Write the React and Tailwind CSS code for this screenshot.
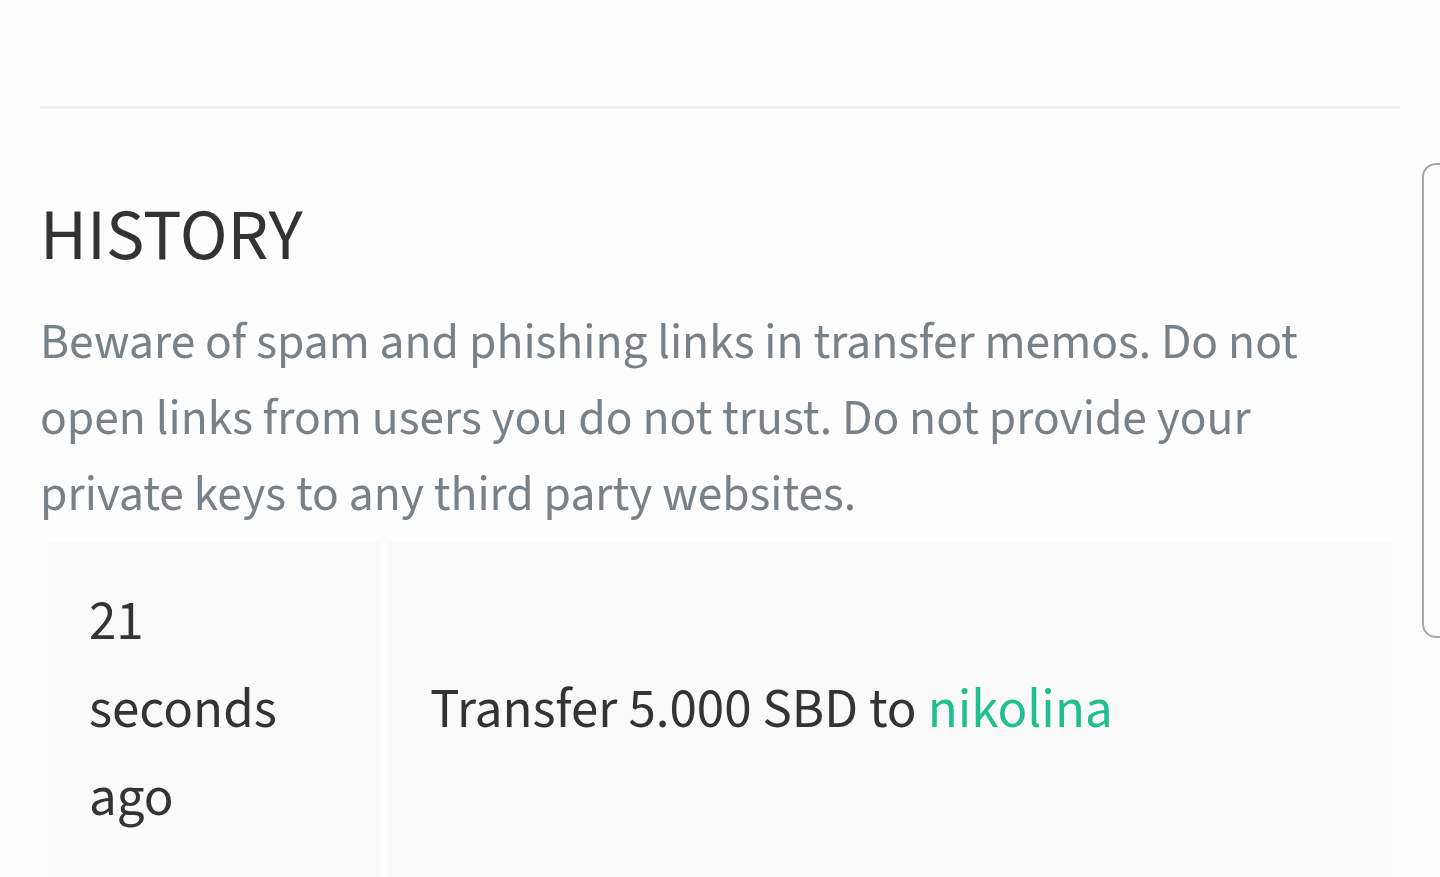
import React from 'react';

const History = () => {
    return (
        <div
            className="relative h-[877px] overflow-hidden bg-[#fdfdfd]"
            style={{ fontFamily: '"Source Sans Pro", "Source Sans 3", Lato, sans-serif' }}
        >
            <div className="px-10 pt-[106px]">
                <div className="h-[3px] bg-[#eeeeee]" />

                {/* Header */}
                <h4 className="mt-[88px] text-[72px] leading-[80px] text-[#333333] font-normal">HISTORY</h4>
                <p className="mt-[28px] text-[#788187] text-[49.5px] leading-[76px]">
                    Beware of spam and phishing links in transfer memos. Do not open links from users you do not trust. Do not provide your private keys to any third party websites.
                </p>

                {/* Transfers */}
                <table className="w-full border-separate border-spacing-2 mt-[1px]">
                    <tbody>
                        <tr>
                            <td className="w-[332px] bg-[#f9f9f9] pl-[41px] pr-6 pt-[36px] pb-[80px] text-[55px] leading-[88px] text-[#333333] align-middle">
                                21
                                <br />
                                seconds
                                <br />
                                ago
                            </td>
                            <td className="bg-[#f9f9f9] pl-[42px] text-[55px] leading-[88px] text-[#333333] align-middle">
                                <div className="-mt-[44px]">
                                    Transfer 5.000 SBD to <a className="text-[#1fbf8f]">nikolina</a>
                                </div>
                            </td>
                        </tr>
                    </tbody>
                </table>
            </div>

            {/* side tab */}
            <div className="absolute left-[1422px] top-[163px] w-[40px] h-[475px] rounded-l-[14px] border-2 border-[#a8a8a8] bg-[#fcfcfc]" />
        </div>
    );
};

export default History;
